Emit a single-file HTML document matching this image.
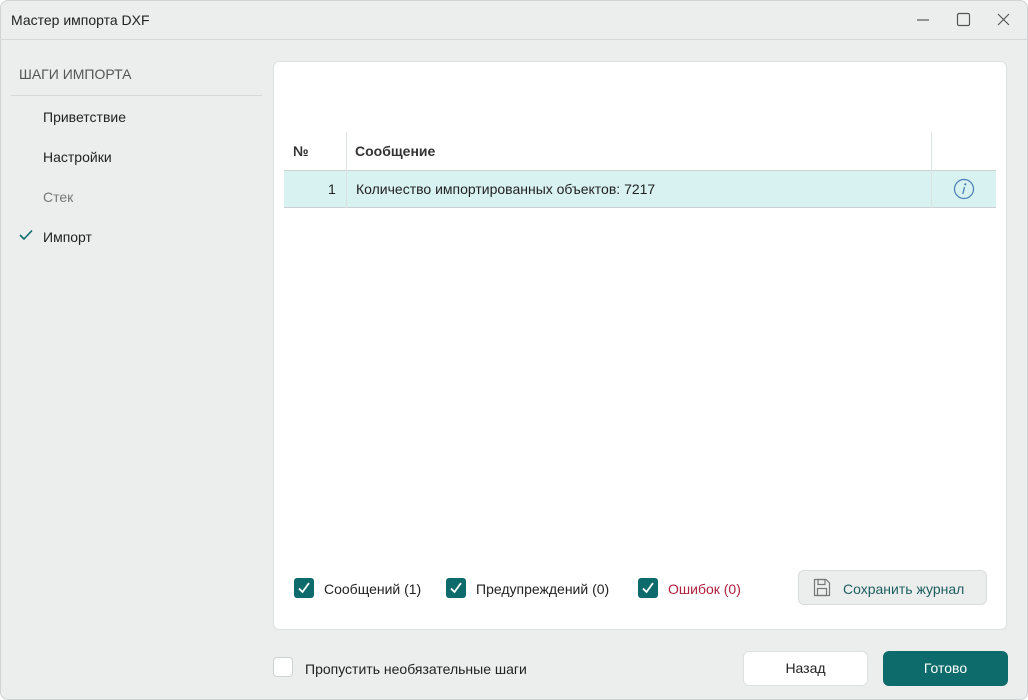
<!DOCTYPE html>
<html><head><meta charset="utf-8"><style>
*{box-sizing:border-box;margin:0;padding:0}
body{width:1028px;height:700px;overflow:hidden;font-family:"Liberation Sans",sans-serif;font-size:14px;color:#222;background:#fff}
.win{position:absolute;left:0;top:0;width:1028px;height:700px;background:#eceeed;border-radius:8px;overflow:hidden;box-shadow:inset 0 0 0 1px #cfd3d3}
.title{position:absolute;left:0;top:0;width:1028px;height:40px;border-bottom:1px solid #d4d8d8}
.abs{position:absolute;white-space:nowrap}
.card{position:absolute;left:273px;top:61px;width:734px;height:569px;background:#fff;border:1px solid #dde1e1;border-radius:6px}
.cb{position:absolute;width:20px;height:20px;background:#0e6b6b;border-radius:3px}
.btn{position:absolute;border-radius:6px;text-align:center}
</style></head><body><div class="win">
<div class="title">
<div class="abs" style="left:11px;top:12px;font-size:14px;color:#222">Мастер импорта DXF</div>
<svg class="abs" style="left:915px;top:11px" width="100" height="18"><path d="M2 9H14" stroke="#555" stroke-width="1.2"/><rect x="42.5" y="2.5" width="12" height="12" rx="1.5" fill="none" stroke="#555" stroke-width="1.2"/><path d="M83 3L94 14M94 3L83 14" stroke="#555" stroke-width="1.2"/></svg>
</div>
<div class="abs" style="left:19px;top:66px;font-size:14px;color:#555">ШАГИ ИМПОРТА</div>
<div class="abs" style="left:11px;top:95px;width:251px;height:1px;background:#d4d8d8"></div>
<div class="abs" style="left:43px;top:109px">Приветствие</div>
<div class="abs" style="left:43px;top:149px">Настройки</div>
<div class="abs" style="left:43px;top:189px;color:#777">Стек</div>
<svg class="abs" style="left:19px;top:229px" width="14" height="12"><path d="M1 6L5 10L13 1.5" fill="none" stroke="#0e6b6b" stroke-width="1.6"/></svg>
<div class="abs" style="left:43px;top:229px">Импорт</div>
<div class="card">
<div class="abs" style="left:10px;top:108px;width:712px;height:1px;background:#c9d3d3"></div>
<div class="abs" style="left:10px;top:109px;width:712px;height:36px;background:#d8f1f1"></div>
<div class="abs" style="left:10px;top:145px;width:712px;height:1px;background:#c9d3d3"></div>
<div class="abs" style="left:72px;top:70px;width:1px;height:76px;background:#dde3e3"></div>
<div class="abs" style="left:657px;top:70px;width:1px;height:76px;background:#dde3e3"></div>
<div class="abs" style="left:19px;top:81px;font-weight:bold;color:#333">№</div>
<div class="abs" style="left:81px;top:81px;font-weight:bold;color:#333">Сообщение</div>
<div class="abs" style="left:54px;top:119px">1</div>
<div class="abs" style="left:82px;top:119px">Количество импортированных объектов: 7217</div>
<svg class="abs" style="left:679px;top:116px" width="22" height="22"><circle cx="11" cy="11" r="9.5" fill="none" stroke="#4a7fb5" stroke-width="1.2"/><circle cx="12.3" cy="6.3" r="1.1" fill="#4a7fb5"/><path d="M11.5 9L9.8 16" stroke="#4a7fb5" stroke-width="1.3"/></svg>
<div class="cb" style="left:20px;top:516px"></div>
<div class="cb" style="left:172px;top:516px"></div>
<div class="cb" style="left:364px;top:516px"></div>
<svg class="abs" style="left:20px;top:516px" width="360" height="20"><g fill="none" stroke="#fff" stroke-width="1.8"><path d="M5 10.5L8.5 14L15 5"/><path d="M157 10.5L160.5 14L167 5"/><path d="M349 10.5L352.5 14L359 5"/></g></svg>
<div class="abs" style="left:50px;top:519px">Сообщений (1)</div>
<div class="abs" style="left:202px;top:519px">Предупреждений (0)</div>
<div class="abs" style="left:394px;top:519px;color:#b0203f">Ошибок (0)</div>
<div class="btn" style="left:524px;top:508px;width:189px;height:35px;background:#eceeed;border:1px solid #d8dcdc"></div>
<svg class="abs" style="left:539px;top:516px" width="18" height="19"><path d="M1.5 1.5H13L16.5 5V17.5H1.5Z" fill="none" stroke="#777" stroke-width="1.2"/><rect x="5" y="1.5" width="7" height="5" fill="none" stroke="#777" stroke-width="1.2"/><rect x="4.5" y="10.5" width="9" height="7" fill="none" stroke="#777" stroke-width="1.2"/></svg>
<div class="abs" style="left:569px;top:519px;color:#1d5e5e">Сохранить журнал</div>
</div>
<div class="abs" style="left:273px;top:657px;width:20px;height:20px;background:#fff;border:1px solid #cdd2d2;border-radius:4px"></div>
<div class="abs" style="left:305px;top:661px">Пропустить необязательные шаги</div>
<div class="btn" style="left:743px;top:651px;width:125px;height:35px;background:#fff;border:1px solid #dde1e1;line-height:33px">Назад</div>
<div class="btn" style="left:883px;top:651px;width:125px;height:35px;background:#0e6b6b;color:#fff;line-height:35px">Готово</div>
</div></body></html>
